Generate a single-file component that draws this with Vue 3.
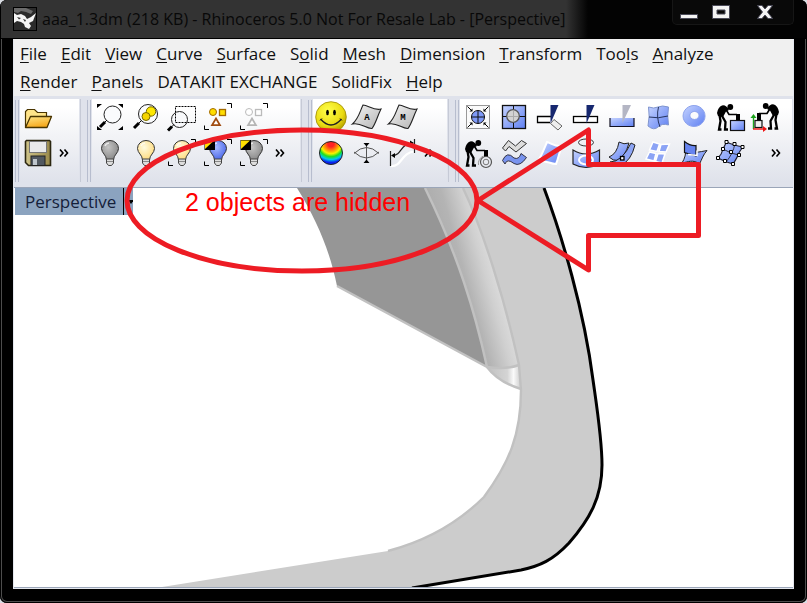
<script setup>
import { ref } from 'vue'

const title = 'aaa_1.3dm (218 KB) - Rhinoceros 5.0 Not For Resale Lab - [Perspective]'

// [text before the access key, access key, text after it]
const menus = [
  ['', 'F', 'ile'], ['', 'E', 'dit'], ['', 'V', 'iew'], ['', 'C', 'urve'],
  ['', 'S', 'urface'], ['S', 'o', 'lid'], ['', 'M', 'esh'], ['', 'D', 'imension'],
  ['', 'T', 'ransform'], ['Too', 'l', 's'], ['', 'A', 'nalyze'], ['', 'R', 'ender'],
  ['', 'P', 'anels'], ['DATAKIT EXCHANGE', '', ''], ['SolidFix', '', ''], ['', 'H', 'elp'],
]

const groups = [
  { name: 'file', rows: [['open'], ['save']] },
  {
    name: 'view',
    rows: [
      ['zoom-extents', 'zoom-selected', 'zoom-window', 'isolate', 'isolate-off'],
      ['bulb-off', 'bulb-on', 'bulb-pick', 'bulb-swap', 'bulb-swap-off'],
    ],
  },
  { name: 'analysis', rows: [['smiley', 'sheet-a', 'sheet-m'], ['rainbow', 'lens', 'curve-fit']] },
  {
    name: 'surface',
    rows: [
      ['shrink', 'grid-hole', 'trim', 'split', 'untrim', 'patch', 'torus', 'push', 'pull'],
      ['cart', 'waves', 'sheet-blue', 'cylinder', 'strip', 'panes', 'fold', 'points'],
    ],
  },
]

// letters printed on the sheet icons
const letters = { 'sheet-a': 'A', 'sheet-m': 'M' }
const active = ref('')
</script>

<template>
  <div class="window">
    <svg class="defs" aria-hidden="true">
      <defs>
        <linearGradient id="g-blue" x1="0" y1="0" x2="1" y2="1"><stop offset="0" stop-color="#c5d3ff" /><stop offset="1" stop-color="#5f80f2" /></linearGradient>
        <linearGradient id="g-gray" x1="0" y1="0" x2="1" y2="1"><stop offset="0" stop-color="#f4f4f4" /><stop offset="1" stop-color="#b4b4b4" /></linearGradient>
        <linearGradient id="g-gold" x1="0" y1="0" x2="0.4" y2="1"><stop offset="0" stop-color="#ffe78a" /><stop offset="1" stop-color="#f5a81c" /></linearGradient>
        <linearGradient id="g-khaki" x1="0" y1="0" x2="1" y2="0"><stop offset="0" stop-color="#cfc48a" /><stop offset="1" stop-color="#99894a" /></linearGradient>
        <radialGradient id="g-face" cx="0.4" cy="0.3" r="0.7"><stop offset="0" stop-color="#ffff4a" /><stop offset="0.7" stop-color="#eadb12" /><stop offset="1" stop-color="#b9a400" /></radialGradient>
        <radialGradient id="g-rainbow" cx="0.5" cy="0.1" r="0.9"><stop offset="0.15" stop-color="#f22" /><stop offset="0.38" stop-color="#ffb000" /><stop offset="0.48" stop-color="#f5f500" /><stop offset="0.62" stop-color="#1fe01f" /><stop offset="0.76" stop-color="#00c8f0" /><stop offset="0.9" stop-color="#0a20ee" /></radialGradient>
        <radialGradient id="b-yellow" cx="0.4" cy="0.35" r="0.7"><stop offset="0" stop-color="#fffbe0" /><stop offset="1" stop-color="#ffd978" /></radialGradient>
        <radialGradient id="b-gray" cx="0.4" cy="0.35" r="0.7"><stop offset="0" stop-color="#c4c4c4" /><stop offset="1" stop-color="#858585" /></radialGradient>
        <radialGradient id="b-blue" cx="0.4" cy="0.35" r="0.7"><stop offset="0" stop-color="#a9b9ff" /><stop offset="1" stop-color="#4463e8" /></radialGradient>
      </defs>

      <symbol id="i-open" viewBox="0 0 36 36">
        <path d="M5.500 28.500V12.500L7.500 10.500H14.500L17.500 13.500H26.500V18" fill="#ffe489" stroke="#4a3500" stroke-width="1.200" />
        <path d="M5.500 28.500L10.500 17.500H31.500L27 28.500z" fill="url(#g-gold)" stroke="#4a3500" stroke-width="1.300" stroke-linejoin="round" />
      </symbol>
      <symbol id="i-save" viewBox="0 0 36 36">
        <path d="M6.500 5.500H29.500L30.500 6.500V30.500H8.500L5.500 27.500V6.500z" fill="url(#g-khaki)" stroke="#2b2610" stroke-width="1.600" />
        <rect x="9.500" y="6.500" width="17" height="11" fill="#e9e9e9" stroke="#777" />
        <rect x="11" y="21" width="14" height="9.500" fill="#515860" stroke="#222" /><rect x="13" y="24" width="4" height="6" fill="#bfc6cc" />
      </symbol>

      <symbol id="i-zoom-extents" viewBox="0 0 36 36">
        <path d="M5 5h5l-5 4zM31 5h-5l5 4zM5 31h5l-5-4zM31 31h-5l5-4z" />
        <circle cx="20.500" cy="15.500" r="8.500" fill="#fafbfd" stroke="#222" /><path d="M8 28L13 23" stroke="#000" stroke-width="3" /><path d="M12 24L15 21" stroke="#000" />
      </symbol>
      <symbol id="i-zoom-selected" viewBox="0 0 36 36">
        <circle cx="20" cy="15" r="9.500" fill="#fafbfd" stroke="#222" /><circle cx="23" cy="12.500" r="4.700" fill="#ffe800" stroke="#776a00" /><circle cx="18" cy="17.500" r="4" fill="#f5d500" stroke="#776a00" />
        <path d="M6 29L11 24" stroke="#000" stroke-width="3" /><path d="M10 25L13.500 21.500" stroke="#000" />
      </symbol>
      <symbol id="i-zoom-window" viewBox="0 0 36 36">
        <circle cx="15.500" cy="20.500" r="8" fill="#f8f9fb" stroke="#222" /><rect x="11.500" y="7.500" width="20" height="16" fill="none" stroke="#000" stroke-dasharray="2 1" />
        <path d="M4 31.500L8 27.500" stroke="#000" stroke-width="3" /><path d="M7 28.500L10 25.500" stroke="#000" />
      </symbol>
      <symbol id="i-corners" viewBox="0 0 36 36"><path d="M27 4.500H31.500V9M4.500 26.500V30.500H9" fill="none" stroke="#000" /></symbol>
      <symbol id="i-isolate" viewBox="0 0 36 36">
        <use href="#i-corners" /><circle cx="13" cy="13" r="3.500" fill="#fd0" stroke="#a36a00" /><rect x="19.500" y="10.500" width="6" height="6" fill="#fd0" stroke="#a36a00" stroke-width="1.300" /><path d="M16 19.500L20 26.200H12z" fill="#fff" stroke="#a04c12" stroke-width="1.700" />
      </symbol>
      <symbol id="i-isolate-off" viewBox="0 0 36 36">
        <use href="#i-corners" /><circle cx="13" cy="13" r="3.500" fill="#fff" stroke="#bbb" /><rect x="19.500" y="10.500" width="6" height="6" fill="#fff" stroke="#bbb" stroke-width="1.300" /><path d="M16 19.500L20 26.200H12z" fill="#fff" stroke="#b5b5b5" stroke-width="1.700" />
      </symbol>

      <symbol id="i-bulb" viewBox="0 0 36 36">
        <path d="M14.500 25C14.500 20 9.500 18 9.500 13.500A8.500 8 0 0 1 26.500 13.500C26.500 18 21.500 20 21.500 25z" stroke="#333" />
        <path d="M14.500 24h7v4l-2 2.500h-3l-2-2.500z" fill="#ddd" stroke="#444" /><path d="M15 26.500h6" stroke="#888" /><path d="M13 11a5 4 0 0 1 4-3" fill="none" stroke="#fff" stroke-width="1.500" opacity="0.700" />
      </symbol>
      <symbol id="i-bulb-off" viewBox="0 0 36 36"><use href="#i-bulb" fill="url(#b-gray)" /></symbol>
      <symbol id="i-bulb-on" viewBox="0 0 36 36"><use href="#i-bulb" fill="url(#b-yellow)" /></symbol>
      <symbol id="i-bulb-pick" viewBox="0 0 36 36"><use href="#i-corners" /><use href="#i-bulb" fill="url(#b-yellow)" /></symbol>
      <symbol id="i-two-tone" viewBox="0 0 36 36"><path d="M4.500 5h10.500v10H4.500z" fill="#000" /><path d="M5 5.500h9L5 14z" fill="#ffe100" /></symbol>
      <symbol id="i-bulb-swap" viewBox="0 0 36 36"><use href="#i-corners" /><use href="#i-bulb" fill="url(#b-blue)" /><use href="#i-two-tone" /></symbol>
      <symbol id="i-bulb-swap-off" viewBox="0 0 36 36"><use href="#i-corners" /><use href="#i-bulb" fill="url(#b-gray)" /><use href="#i-two-tone" /></symbol>

      <symbol id="i-smiley" viewBox="0 0 36 36">
        <circle cx="18" cy="18" r="15.300" fill="url(#g-face)" stroke="#9c8a00" stroke-width="0.800" /><ellipse cx="14.500" cy="13.500" rx="1.400" ry="2.700" /><ellipse cx="21.500" cy="13.500" rx="1.400" ry="2.700" /><path d="M7.500 20Q18 32 28.500 20" fill="none" stroke="#222" stroke-width="1.400" /><path d="M7 21.500l2-2M29 21.500l-2-2" stroke="#222" />
      </symbol>
      <symbol id="i-sheet-a" viewBox="0 0 36 36"><path d="M14 6C19 6 25 12 32 10C28 18 27 24 23 29.500C17 30 12 23 3.500 25C10 19 11 12 14 6z" fill="url(#g-gray)" stroke="#222" stroke-width="1.100" /></symbol>
      <symbol id="i-sheet-m" viewBox="0 0 36 36"><use href="#i-sheet-a" /></symbol>
      <symbol id="i-rainbow" viewBox="0 0 36 36"><circle cx="18" cy="18" r="11.500" fill="url(#g-rainbow)" stroke="#222" /></symbol>
      <symbol id="i-lens" viewBox="0 0 36 36"><path d="M5 18.500Q17.500 6.500 30 18.500M5 17Q17.500 29 30 17M17.500 9v18" fill="none" stroke="#555" /><path d="M14.500 8h6l-3 3.500zM14.500 28h6l-3-3.500z" /></symbol>
      <symbol id="i-curve-fit" viewBox="0 0 36 36">
        <path d="M6 31C17 32 16 17 30 16.500" fill="none" stroke="#fff" stroke-width="2.200" /><path d="M7 20.500C18 20 14 9 28 8M5.500 16v15M29.500 4v14" fill="none" stroke="#222" stroke-width="1.200" /><path d="M6 20.500l4-2.500v5zM29 8l-4-2.500v5z" />
      </symbol>

      <symbol id="i-shrink" viewBox="0 0 36 36">
        <rect x="6.500" y="6.500" width="23" height="23" fill="#fafafa" stroke="#999" /><circle cx="18" cy="18" r="6.500" fill="#7f9af8" stroke="#111" /><path d="M18 11v14M11 18h14" stroke="#111" />
        <path d="M7.500 7.500l4 4M28.500 7.500l-4 4M7.500 28.500l4-4M28.500 28.500l-4-4" stroke="#000" /><path d="M12.500 9.500v3h-3zM23.500 9.500v3h3zM12.500 26.500v-3h-3zM23.500 26.500v-3h3z" />
      </symbol>
      <symbol id="i-grid-hole" viewBox="0 0 36 36"><rect x="6.500" y="6.500" width="23" height="23" fill="url(#g-blue)" stroke="#111" stroke-width="1.300" /><path d="M17.500 6v24M6 17.500h24" stroke="#111" /><circle cx="17" cy="17" r="6.300" fill="#d2d2d2" stroke="#555" stroke-width="1.300" /><path d="M17.500 12v10M12 17.500h10" stroke="#aaa" /></symbol>
      <symbol id="i-trim" viewBox="0 0 36 36"><path d="M19 17.500H5.500v6H18" fill="#fff" stroke="#000" stroke-width="1.300" /><path d="M22 20.500L30 27L26 31L18.500 24.500z" fill="#eee" stroke="#666" /><path d="M18.500 6h8L18.500 24.500z" fill="#16276f" /></symbol>
      <symbol id="i-split" viewBox="0 0 36 36"><rect x="5.500" y="17.500" width="24" height="6" fill="#fff" stroke="#000" stroke-width="1.300" /><path d="M18.500 6h8L18.500 24.500z" fill="#16276f" /></symbol>
      <symbol id="i-untrim" viewBox="0 0 36 36"><rect x="6" y="19" width="24" height="8.500" fill="url(#g-blue)" /><path d="M6 19v8.500h24V19" fill="none" stroke="#112" stroke-width="1.200" /><path d="M18.500 6h8.500L18.500 24z" fill="#b4b6c4" /></symbol>
      <symbol id="i-patch" viewBox="0 0 36 36"><path d="M8.500 8Q14 10 18 8T28.500 8Q27 17 28.500 26Q22 24 18 28T8 27Q10 17 8.500 8z" fill="url(#g-blue)" stroke="#8095cf" /><path d="M18.500 8Q16 18 20 28M9 18Q18 20 28 17" fill="none" stroke="#26345f" /></symbol>
      <symbol id="i-torus" viewBox="0 0 36 36"><path fill-rule="evenodd" d="M18 6.500a11 10.500 0 1 0 .1 0zM18.500 12.500a4.500 4 0 1 1-.1 0z" fill="url(#g-blue)" stroke="#8ca2ed" /></symbol>
      <symbol id="i-man" viewBox="0 0 36 36">
        <circle cx="18.300" cy="8" r="2.900" /><path d="M5 14Q6 8 10 6.500Q14 5.500 17 11L14 12.500L11 18L6 17z" />
        <path d="M13 9L17 15.500H25" fill="none" stroke="#000" stroke-width="1.700" /><path d="M7.500 16L8.500 22L7 30.500H9.500M9.500 16L13.500 23L13 30.500H16" fill="none" stroke="#000" stroke-width="2.300" />
      </symbol>
      <symbol id="i-push" viewBox="0 0 36 36"><use href="#i-man" /><rect x="24" y="15" width="4" height="7" /><rect x="18.500" y="21.500" width="14" height="10" fill="url(#g-blue)" stroke="#111" stroke-width="1.200" /></symbol>
      <symbol id="i-pull" viewBox="0 0 36 36">
        <g transform="translate(36 -1) scale(-1 1)"><use href="#i-man" width="36" height="36" /></g><rect x="9" y="14" width="4" height="7" /><path d="M5.500 30V18" stroke="#1ca51c" stroke-width="1.400" /><path d="M2.500 19l3-4 3 4z" fill="#1ca51c" /><rect x="7" y="21.500" width="7" height="7" fill="#eee" stroke="#111" stroke-width="1.200" /><path d="M5 30h11" stroke="#e11" stroke-width="1.400" /><path d="M15 27l4 3-4 3z" fill="#e11" />
      </symbol>
      <symbol id="i-cart" viewBox="0 0 36 36"><use href="#i-man" /><rect x="24" y="15" width="4" height="7" /><circle cx="26" cy="27" r="5.500" fill="none" stroke="#555" stroke-width="1.200" /><circle cx="26" cy="27" r="2.800" fill="none" stroke="#777" /><path d="M18.500 30a8 8 0 0 1 5-9" fill="none" stroke="#999" /></symbol>
      <symbol id="i-waves" viewBox="0 0 36 36"><path d="M6.500 13L12.500 5.500L19.500 11L25.500 5.500L30.500 8.500L20 17L13 11.500L9.500 16z" fill="#ddd" stroke="#333" /><path d="M6.500 25.500Q11 15.500 18 23Q23 25 25 18.500L30.500 22.500Q24 32 18 28.500Q11 23 9 29z" fill="#7893ee" stroke="#334" /></symbol>
      <symbol id="i-sheet-blue" viewBox="0 0 36 36"><path d="M15 7C19 8 23 12 30 11C27 17 27 22 24 29C18 29 14 25 6 26C10 20 12 14 15 7z" fill="url(#g-blue)" stroke="#fff" stroke-width="2" /></symbol>
      <symbol id="i-cylinder" viewBox="0 0 36 36"><ellipse cx="18" cy="7.500" rx="7.500" ry="3.500" fill="none" stroke="#333" /><path d="M5 15Q18 23 31.500 15V29Q18 36 5 29z" fill="url(#g-blue)" stroke="#222" stroke-width="1.200" /><ellipse cx="18" cy="25" rx="7" ry="4.500" fill="none" stroke="#fff" stroke-width="2" /></symbol>
      <symbol id="i-strip" viewBox="0 0 36 36"><path d="M15 7Q20 10 25 8Q21 22 14 25.500Q9 26 5 22Q13 19 15 7z" fill="url(#g-blue)" stroke="#222" /><path d="M27 8L31 10Q27 26 17 30Q11 30 6 27Q18 27 27 8z" fill="#8da5f5" stroke="#222" /><rect x="16.500" y="21.500" width="3.500" height="3.500" fill="#fff" stroke="#000" stroke-width="1.300" /></symbol>
      <symbol id="i-panes" viewBox="0 0 36 36"><path d="M13 7L19.500 9L17 16.500L9.500 15zM21 9.500L29.500 9L26 17L19 16.500zM9.500 17L16 18.500L14 26L6 24zM18 18.500L25 19L22 28L15.500 26.500z" fill="#8ba3f5" stroke="#fff" stroke-width="1.500" /></symbol>
      <symbol id="i-fold" viewBox="0 0 36 36"><path d="M9.500 14C17 19 23 17 31 15.500C27 20 26 24 23.500 29C17 24 12 27 6 28C9 23 10 19 9.500 14z" fill="url(#g-blue)" stroke="#222" /><path d="M8.500 6.500Q14 11 20 10.500V21L8.500 17.500z" fill="#6684f0" stroke="#111" stroke-width="1.200" /><path d="M12 19.500l9 1v-5" fill="none" stroke="#fff" stroke-width="1.500" /></symbol>
      <symbol id="i-points" viewBox="0 0 36 36">
        <path d="M14.500 7Q21 10 31 12Q27 17 26 20T21 29Q13 27 6 23Q10 19 11 14z" fill="url(#g-blue)" stroke="#223" stroke-width="1.200" /><path d="M23 8.500Q21 19 14 27M11 14Q19 19 27 20" fill="none" stroke="#334" />
        <path d="M13 5.500h3V8.500H13zM21 7.500h3v3H21zM29 10.500h3V13.500H29zM9.500 12.500H12.500V15.500H9.500zM17.500 15.500H20.500V18.500h-3zM25.500 18.500h3V21.500H25.500zM4.500 21.500H7.500V24.500H4.500zM11.500 24.500H14.500V27.500h-3zM19.500 27.500h3v3H19.500z" fill="#fff" stroke="#000" />
      </symbol>
    </svg>

    <header class="titlebar">
      <svg class="app-icon" viewBox="0 0 24 24" aria-hidden="true">
        <rect x="0.500" y="0.500" width="23" height="23" fill="#2b2b2b" stroke="#000" />
        <path d="M1 1H13L20 4L18 7L13 5L8 4L5 6L1 5z" fill="#6b6b6b" />
        <path d="M1 6L4 8L8 7L12 9L14 12L18 10L23 6L20 14L16 16L18 19L16 22L12 20L11 17L8 15L4 14L1 16z" fill="#f5f5f5" /><path d="M4 10l4 1-2 1.500zM10 12l3 1-1 2z" fill="#333" />
      </svg>
      <h1>{{ title }}</h1>
      <div class="caption">
        <button type="button" aria-label="Minimize"><svg width="18" height="16"><rect x="0.500" y="10.500" width="17" height="4" fill="#f4f4f4" stroke="#4a4a58" /></svg></button>
        <button type="button" aria-label="Maximize"><svg width="18" height="16"><path fill-rule="evenodd" d="M0.500 1.500h17v13H0.500zM5 6v4h8v-4z" fill="#f4f4f4" stroke="#4a4a58" /></svg></button>
        <button type="button" class="close" aria-label="Close"><svg width="18" height="16"><path d="M1.500 1.500h4.500L9 5L12 1.500H16.500L11.500 8L16.500 14.500H12L9 11L6 14.500H1.500L6.500 8z" fill="#f4f4f4" stroke="#4a4a58" /></svg></button>
      </div>
    </header>

    <main class="client">
      <nav class="menubar">
        <button v-for="m in menus" :key="m.join('')" type="button">{{ m[0] }}<u v-if="m[1]">{{ m[1] }}</u>{{ m[2] }}</button>
      </nav>

      <div class="toolbars">
        <section v-for="g in groups" :key="g.name" :class="['group', g.name]" :aria-label="g.name">
          <span class="grip"></span>
          <div class="panel">
            <div v-for="(row, r) in g.rows" :key="r" class="row">
              <button v-for="icon in row" :key="icon" type="button" class="tool" :aria-label="icon" @click="active = icon">
                <svg viewBox="0 0 36 36">
                  <use :href="'#i-' + icon" />
                  <text v-if="letters[icon]" x="18" y="21" class="glyph">{{ letters[icon] }}</text>
                </svg>
              </button>
              <button v-if="r === 1" type="button" class="more" aria-label="More tools">
                <svg width="10" height="8"><path d="M1 0.500L4 4L1 7.500M5.500 0.500L8.500 4L5.500 7.500" fill="none" stroke="#000" stroke-width="1.600" /></svg>
              </button>
            </div>
          </div>
        </section>
      </div>

      <section class="viewport">
        <svg class="scene" aria-hidden="true">
          <defs>
            <linearGradient id="g-fillet" gradientUnits="userSpaceOnUse" x1="455" y1="290" x2="508" y2="275"><stop offset="0" stop-color="#aeaeae" /><stop offset="0.250" stop-color="#b4b4b4" /><stop offset="0.600" stop-color="#d0d0d0" /><stop offset="0.850" stop-color="#dedede" /><stop offset="1" stop-color="#cecece" /></linearGradient>
            <linearGradient id="g-tip" x1="0" y1="0" x2="1" y2="0"><stop offset="0" stop-color="#c0c0c0" /><stop offset="0.600" stop-color="#d4d4d4" /><stop offset="0.780" stop-color="#fafafa" /><stop offset="1" stop-color="#ccc" /></linearGradient>
          </defs>
          <g transform="translate(-14 -188)">
            <path d="M463 188H544C562 236 584 310 593 380C598 415 602 440 602 465C602 497 590 519 569 543C553 560 540 566 521 570L413 587H162L388 551C437 538 466 515 484 497C509 463 521 435 521 390L519 365C505 300 483 230 463 188z" fill="#ccc" />
            <path d="M297 188H425C458 255 475 312 487 367L337 286C330 252 318 222 297 188z" fill="#969696" />
            <path d="M425 188H463C483 230 505 300 519 365Q505 370 487 367C475 312 458 255 425 188z" fill="url(#g-fillet)" />
            <path d="M487 367Q505 370 519 365L521 389Q498 382 487 367z" fill="url(#g-tip)" />
            <g fill="none" stroke="#c1c1c1" stroke-width="2.400">
              <path d="M337 286L487 367C475 312 458 255 425 188" /><path d="M463 188C483 230 505 300 519 365L521 390C521 435 509 463 484 497C466 515 437 538 388 551" /><path d="M487 367Q505 370 519 365M487 367Q498 382 521 389" />
            </g>
            <path d="M544 188C562 236 584 310 593 380C598 415 602 440 602 465C602 497 590 519 569 543C553 560 540 566 521 570L412 588" fill="none" stroke="#000" stroke-width="3" />
          </g>
        </svg>
        <div class="tab">
          <button type="button" class="tab-name">Perspective</button>
          <button type="button" class="tab-menu" aria-label="Viewport menu"><svg width="6" height="4"><path d="M0 0h6L3 4z" /></svg></button>
        </div>
      </section>
    </main>

    <svg class="notes">
      <g fill="none" stroke="#ed1c24" stroke-width="5" stroke-linejoin="round">
        <ellipse cx="302" cy="200.500" rx="175" ry="70.500" />
        <path d="M478 200.500L588.500 130V164.500H698.500V235.500H588.500V270z" />
      </g>
      <text x="185" y="211">2 objects are hidden</text>
    </svg>
  </div>
</template>

<style>
body { margin: 0; background: #d9dce3; }
</style>

<style scoped>
.window {
  position: relative;
  box-sizing: border-box;
  min-height: 100vh;
  display: flex;
  flex-direction: column;
  padding: 0 13px 14px;
  background: #000;
  border-radius: 7px;
  box-shadow: inset 0 0 0 1px #000, inset 0 0 0 2px #4d4d4d;
  overflow: hidden;
  font-family: "Open Sans", "Noto Sans", sans-serif;
  font-size: 17px;
  color: #111;
}
button { border: 0; padding: 0; margin: 0; background: none; font: inherit; color: inherit; }
.defs { position: absolute; width: 0; height: 0; }
.glyph { font: bold 9px "Liberation Mono", monospace; fill: #000; text-anchor: middle; }

.titlebar {
  display: flex;
  align-items: center;
  height: 38px;
  margin: 0 -12px;
  padding-left: 12px;
  border-bottom: 1px solid #000;
  background: linear-gradient(90deg, #333 565px, #030303 587px);
}
.app-icon { width: 24px; height: 24px; flex: none; }
h1 { flex: 1; margin: 0 0 0 5px; font-size: 16px; font-weight: 400; line-height: 24px; white-space: nowrap; color: #080808; }
.caption {
  display: flex;
  align-self: flex-start;
  align-items: center;
  height: 24px;
  margin-right: 12px;
  border: 1px solid #161616;
  border-top: 0;
  border-radius: 0 0 5px 5px;
  background: #090909;
}
.caption button { display: flex; width: 32px; justify-content: center; }
.caption button.close { width: 56px; }

.client { flex: 1; display: flex; flex-direction: column; border: 1px solid #e4e7ee; border-top: 0; background: #f0f0f0; }
.menubar { display: flex; flex-wrap: wrap; column-gap: 14px; padding: 1px 24px 0 6px; }
.menubar button { line-height: 28px; white-space: nowrap; }
u { text-decoration-thickness: 1px; text-underline-offset: 2px; }

.toolbars { display: flex; gap: 6px; padding: 3px 0 5px 1px; background: #dfe2eb; border-bottom: 1px solid #9aa5b8; }
.group { display: flex; border-right: 1px solid #c6cad6; }
.surface { flex: 1; border-right-color: transparent; }
.grip { width: 2px; margin: 1px 1px 0 0; border: solid #b7bdce; border-width: 0 1px; }
.panel { padding-bottom: 11px; background: linear-gradient(#fff 10%, #f2f3f6 45%, #dfe2eb); margin-right: 1px; }
.surface .panel { flex: 1; margin-right: 0; }
.row { display: flex; align-items: center; height: 36px; }
.tool { flex: none; width: 36px; height: 36px; }
.tool svg { display: block; width: 36px; height: 36px; }
.more { display: flex; justify-content: center; width: 16px; margin-right: 7px; }
.view .more { margin-right: 12px; }
.analysis .more { margin-right: 10px; }
.surface .more { margin: 0 8px 0 auto; }

.viewport { position: relative; flex: 1; display: flex; align-items: flex-start; background: #fff; border: solid #9aa5b8; border-width: 0 0 1px; }
.scene { position: absolute; inset: 0; width: 100%; height: 100%; }
.tab { position: relative; display: flex; height: 27px; margin-left: 1px; background: #8ba3bf; color: #14203a; }
.tab-name { padding: 0 7px 0 10px; line-height: 27px; }
.tab-menu { display: flex; align-items: center; width: 10px; padding-left: 4px; border-left: 1px solid #000; }

.notes { position: absolute; inset: 0; width: 100%; height: 100%; pointer-events: none; }
.notes text { font: 25px "Liberation Sans", Arial, sans-serif; fill: #f00; }
</style>
